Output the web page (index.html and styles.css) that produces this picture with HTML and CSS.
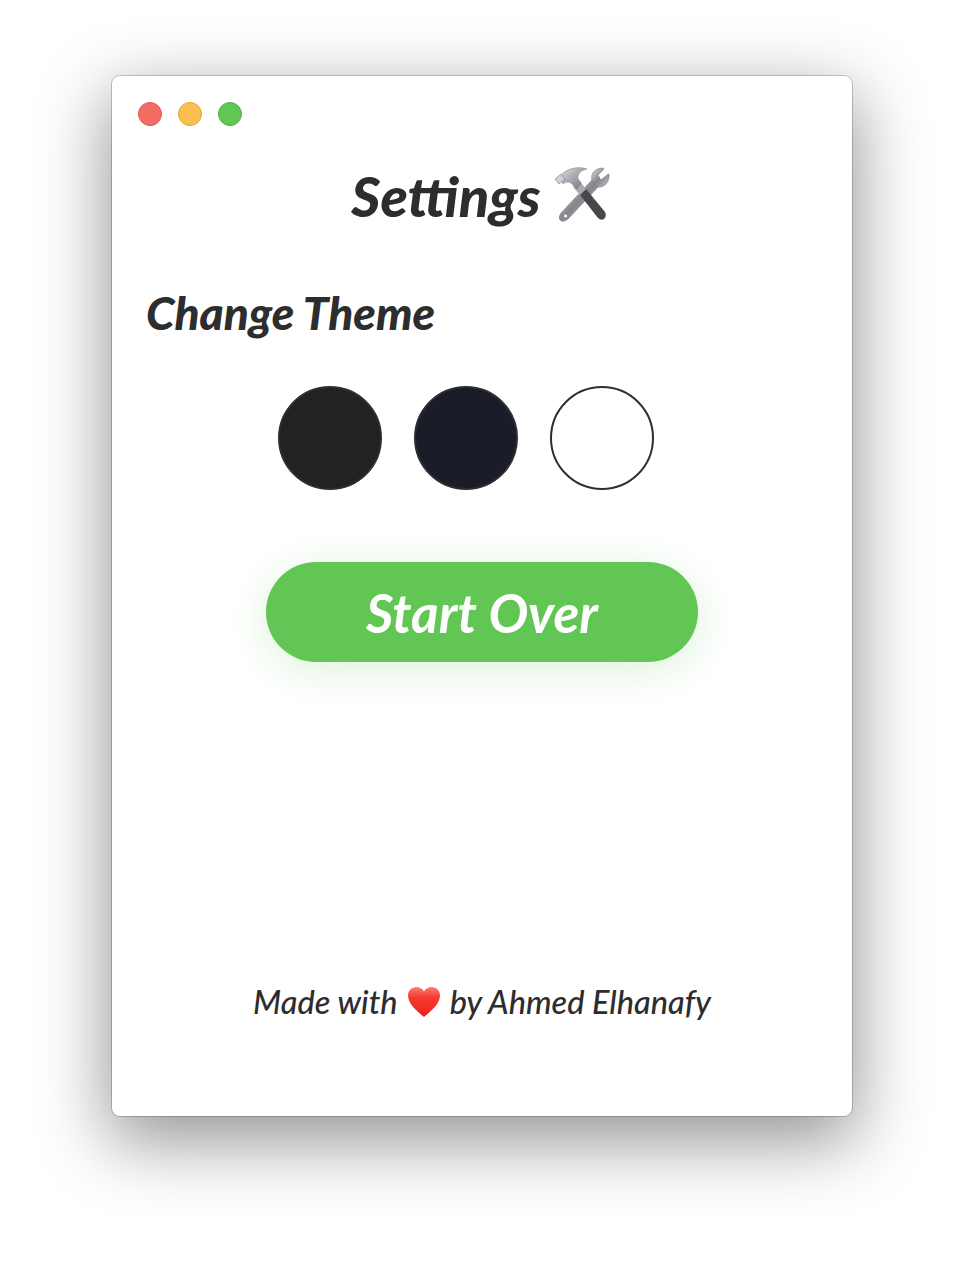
FILE: index.html
```html
<!DOCTYPE html>
<html lang="en">
<head>
<meta charset="utf-8">
<title>Settings</title>
<link rel="stylesheet" href="styles.css">
</head>
<body>
<main class="window">
  <div class="traffic">
    <span class="light light-red"></span>
    <span class="light light-yellow"></span>
    <span class="light light-green"></span>
  </div>
  <h1 class="title">Settings
    <svg class="tools" viewBox="0 0 60 60" aria-hidden="true">
      <defs>
        <linearGradient id="steel" x1="0" y1="0" x2="1" y2="1">
          <stop offset="0" stop-color="#e0e0e4"/>
          <stop offset=".5" stop-color="#85858c"/>
          <stop offset="1" stop-color="#c4c4ca"/>
        </linearGradient>
        <linearGradient id="head" x1="0" y1="0" x2="1" y2="1">
          <stop offset="0" stop-color="#dcdce0"/>
          <stop offset="1" stop-color="#6d6d74"/>
        </linearGradient>
      </defs>
      <path d="M8 47 L39 14 L46 20 L15 53 Q10 57 7 54 Q5 51 8 47Z" fill="url(#steel)" stroke="#77777d" stroke-width=".6"/>
      <path d="M40 17 C36 9 41 2 50 2 L51 3 L45 9 L48 14 L54 9 L56 8 C57 16 51 22 45 21Z" fill="url(#steel)" stroke="#77777d" stroke-width=".6"/>
      <circle cx="12.500" cy="50" r="2" fill="#fff" stroke="#666" stroke-width=".6"/>
      <path d="M27 29 L33 23 L52 46 Q54 50 51 53 Q48 55 45 52Z" fill="#47474c"/>
      <path d="M20 21 L26 14 L33 23 L27 29Z" fill="#a9a9af"/>
      <path d="M8 9 C14 2 26 0 34 3 C28 4 24 8 25 13 L28 17 L24 23 L18 17 C15 15 12 16 10 18Z" fill="url(#head)" stroke="#77777d" stroke-width=".5"/>
      <path d="M2 13 L8 8 L12 13 L6 18Z" fill="#ccd0da" stroke="#7b7b84" stroke-width=".6"/>
    </svg>
  </h1>
  <h2 class="subtitle">Change Theme</h2>
  <div class="themes">
    <button class="swatch swatch-dark" type="button"></button>
    <button class="swatch swatch-navy" type="button"></button>
    <button class="swatch swatch-light" type="button"></button>
  </div>
  <div class="actions"><button class="start" type="button">Start Over</button></div>
  <p class="credit">Made with
    <svg class="heart" viewBox="0 0 32 30" aria-hidden="true">
      <defs>
        <linearGradient id="red" x1="0" y1="0" x2="0" y2="1">
          <stop offset="0" stop-color="#ff7d73"/>
          <stop offset=".35" stop-color="#f83a30"/>
          <stop offset="1" stop-color="#e8211c"/>
        </linearGradient>
      </defs>
      <path d="M16 30 C9 24 0 17 0 8.500 C0 3.500 3.800 0 8.500 0 C11.500 0 14.500 1.500 16 4.500 C17.500 1.500 20.500 0 23.500 0 C28.200 0 32 3.500 32 8.500 C32 17 23 24 16 30Z" fill="url(#red)"/>
    </svg>
    by Ahmed Elhanafy</p>
</main>
</body>
</html>
```
FILE: styles.css
```css
* { box-sizing: border-box; }
html, body { margin: 0; height: 100%; background: #fff; }
body {
  height: 1264px;
  overflow: hidden;
  padding-top: 76px;
  display: flex;
  justify-content: center;
  align-items: flex-start;
  font-family: "Lato", sans-serif;
  font-style: italic;
  color: #2d2d2d;
}
.window {
  width: 740px;
  height: 1040px;
  background: #fff;
  border-radius: 8px;
  box-shadow: 0 0 0 1px rgba(0,0,0,.2), 0 22px 70px 4px rgba(0,0,0,.42);
  padding: 26px 26px 0;
  display: flex;
  flex-direction: column;
}
.traffic { display: flex; gap: 16px; }
.light { width: 24px; height: 24px; border-radius: 50%; border: 1px solid; }
.light-red { background: #f46d64; border-color: #e0564e; }
.light-yellow { background: #fbc04f; border-color: #e2a43c; }
.light-green { background: #62c654; border-color: #50ae44; }
.title {
  margin: 32px 0 0;
  height: 76px;
  display: flex;
  justify-content: center;
  align-items: center;
  gap: 12px;
  font-size: 56px;
  line-height: 76px;
  font-weight: 900;
}
.tools { width: 60px; height: 60px; }
.subtitle {
  margin: 43px 0 0 8px;
  font-size: 46px;
  line-height: 72px;
  font-weight: 900;
}
.themes { display: flex; justify-content: center; margin-top: 37px; }
.swatch { width: 104px; height: 104px; border-radius: 50%; border: 2px solid #2d2d33; padding: 0; margin-right: 32px; }
.swatch-dark { background: #222; }
.swatch-navy { background: #1a1c27; }
.swatch-light { background: #fff; }
.actions { display: flex; justify-content: center; margin-top: 72px; }
.start {
  width: 432px;
  height: 100px;
  border: 0;
  border-radius: 50px;
  background: #62c655;
  color: #fff;
  font: italic 700 53px "Lato", sans-serif;
  box-shadow: 0 8px 40px rgba(98,198,85,.22);
}
.credit {
  margin: 312px 0 0;
  display: flex;
  justify-content: center;
  align-items: center;
  gap: 10px;
  font-size: 32.500px;
  line-height: 56px;
  font-weight: 500;
}
.heart { width: 32px; height: 30px; }
```
